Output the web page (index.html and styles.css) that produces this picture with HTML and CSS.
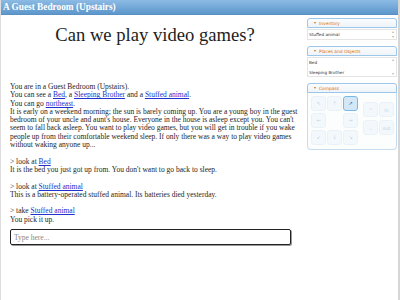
FILE: index.html
```html
<!DOCTYPE html>
<html lang="en">
<head>
  <meta charset="UTF-8">
  <meta name="viewport" content="width=device-width, initial-scale=1.0">
  <title>Can we play video games?</title>
  <link rel="stylesheet" href="styles.css">
</head>
<body>
<div class="frame">
  <div class="topbar">A Guest Bedroom (Upstairs)</div>
  <div class="layout">
    <!-- story column -->
    <main class="story">
      <h1 class="title">Can we play video games?</h1>
      <div class="output">
        <p>You are in a Guest Bedroom (Upstairs).<br>
        You can see a <a href="#">Bed</a>, a <a href="#">Sleeping Brother</a> and a <a href="#">Stuffed animal</a>.<br>
        You can go <a href="#">northeast</a>.<br>
        It is early on a weekend morning; the sun is barely coming up. You are a young boy in the guest bedroom of your uncle and aunt's house. Everyone in the house is asleep except you. You can't seem to fall back asleep. You want to play video games, but you will get in trouble if you wake people up from their comfortable weekend sleep. If only there was a way to play video games without waking anyone up...</p>
        <p>&gt; look at <a href="#">Bed</a><br>
        It is the bed you just got up from. You don't want to go back to sleep.</p>
        <p>&gt; look at <a href="#">Stuffed animal</a><br>
        This is a battery-operated stuffed animal. Its batteries died yesterday.</p>
        <p>&gt; take <a href="#">Stuffed animal</a><br>
        You pick it up.</p>
      </div>
      <input class="command" type="text" placeholder="Type here...">
    </main>

    <!-- side panels -->
    <aside class="sidebar">
      <section class="panel">
        <div class="panel-head"><span class="caret"></span>Inventory</div>
        <div class="list">
          <div class="items"><div>Stuffed animal</div></div>
          <div class="scroll"><span>&#9652;</span><span>&#9662;</span></div>
        </div>
      </section>
      <section class="panel">
        <div class="panel-head"><span class="caret"></span>Places and Objects</div>
        <div class="list tall">
          <div class="items"><div>Bed</div><div>Sleeping Brother</div></div>
          <div class="scroll"><span>&#9652;</span><span>&#9662;</span></div>
        </div>
      </section>
      <section class="panel">
        <div class="panel-head"><span class="caret"></span>Compass</div>
        <div class="compass">
          <div class="dirs">
            <div class="btn off">&#8598;</div>
            <div class="btn off">&#8593;</div>
            <div class="btn on">&#8599;</div>
            <div class="btn off">&#8592;</div>
            <div class="gap"></div>
            <div class="btn off">&#8594;</div>
            <div class="btn off">&#8601;</div>
            <div class="btn off">&#8595;</div>
            <div class="btn off">&#8600;</div>
          </div>
          <div class="extra">
            <div class="btn off">&#8963;</div>
            <div class="btn off">in</div>
            <div class="btn off">&#8964;</div>
            <div class="btn off">out</div>
          </div>
        </div>
      </section>
    </aside>
  </div>
</div>
</body>
</html>
```

FILE: styles.css
```css
* {
  box-sizing: border-box;
}
html, body {
  margin: 0;
  height: 100%;
}
body {
  font-family: "Liberation Serif", "Times New Roman", serif;
  color: #1e1e1e;
  background: #fff;
}
.frame {
  height: 300px;
  border-left: 1px solid #dcdcdc;
  border-right: 2px solid #d6d6d6;
  overflow: hidden;
}
.topbar {
  height: 15px;
  padding-left: 2px;
  background: linear-gradient(#8cbbe4, #5d97cc);
  border-bottom: 1px solid #5a90c4;
  color: #fff;
  font-weight: bold;
  font-size: 9.3px;
  line-height: 14px;
  white-space: nowrap;
}
.layout {
  display: flex;
  gap: 7px;
}

/* story */
.story {
  width: 299px;
  flex: none;
  padding-left: 9px;
}
.title {
  margin: 8px 0 36px;
  font-weight: normal;
  font-size: 18.6px;
  line-height: 24px;
  text-align: center;
}
.output p {
  margin: 0 0 8.3px;
  font-size: 7.5px;
  line-height: 8.3px;
}
.output p:last-child {
  margin-bottom: 0;
}
.output a {
  color: #2230cc;
}
.command {
  display: block;
  width: 281px;
  height: 16px;
  margin-top: 5px;
  padding: 0 3px;
  border: 1px solid #222;
  border-radius: 2px;
  box-shadow: 1px 1px 0 #999;
  font-family: "Liberation Serif", serif;
  font-size: 7.5px;
  color: #222;
  outline: none;
}
.command::placeholder {
  color: #888;
}

/* sidebar */
.sidebar {
  width: 90px;
  padding-top: 3px;
  font-family: "DejaVu Sans", "Liberation Sans", sans-serif;
}
.panel {
  margin-bottom: 6px;
}
.panel-head {
  height: 10px;
  display: flex;
  align-items: center;
  gap: 3px;
  padding-left: 6px;
  border: 1px solid #9cc6ea;
  border-radius: 3px 3px 0 0;
  background: linear-gradient(#fbfcfd, #eef4f8);
  color: #e17009;
  font-size: 4.4px;
}
.caret {
  width: 0;
  height: 0;
  border-left: 1.5px solid transparent;
  border-right: 1.5px solid transparent;
  border-top: 2px solid #e17009;
}
.list {
  display: flex;
  height: 11px;
  margin-top: 1px;
  border: 1px solid #e4e4e4;
  background: #fff;
  color: #333;
  font-size: 4.2px;
}
.list.tall {
  height: 20px;
}
.items {
  flex: 1;
  padding-left: 1px;
}
.items div {
  height: 9.5px;
  line-height: 9.5px;
}
.scroll {
  width: 6px;
  display: flex;
  flex-direction: column;
  justify-content: space-between;
  align-items: center;
  color: #b8b8b8;
  font-size: 4px;
  line-height: 4px;
}
.compass {
  display: flex;
  align-items: center;
  height: 57px;
  padding: 0 0 2px 3px;
  border: 1px solid #c6dcef;
  border-top: none;
  border-radius: 0 0 4px 4px;
  background: #fcfdfd;
}
.dirs {
  display: grid;
  grid-template-columns: repeat(3, 15px);
  grid-auto-rows: 15px;
  column-gap: 1px;
  row-gap: 2px;
}
.extra {
  display: grid;
  grid-template-columns: repeat(2, 15px);
  grid-auto-rows: 15px;
  column-gap: 1px;
  row-gap: 3px;
  margin-left: 5px;
  margin-top: -3px;
}
.btn {
  display: flex;
  align-items: center;
  justify-content: center;
  border: 1px solid #c5dbec;
  border-radius: 3px;
  background: #dfeffc;
  color: #2e6e9e;
  font-size: 5px;
}
.btn.off {
  opacity: .3;
}
.btn.on {
  border-color: #79b7e7;
  background: #d4e7f7;
}
```
